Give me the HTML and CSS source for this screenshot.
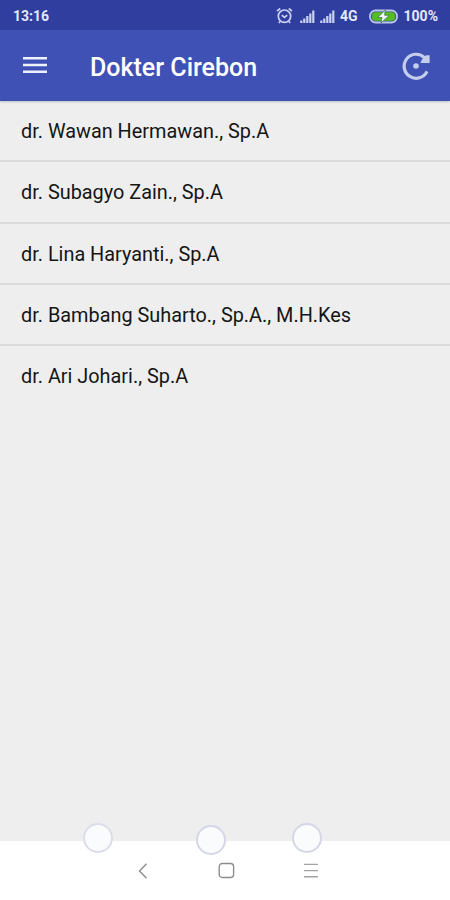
FILE: index.html
```html
<!DOCTYPE html>
<html lang="id">

<head>
    <title>Dokter Cirebon</title>
    <meta charset="utf-8">
    <meta name="viewport" content="width=device-width, initial-scale=1">
    <link rel="stylesheet" href="styles.css">
</head>

<body>
    <div class="statusbar">
        <span class="jam">13:16</span>
        <div class="status">
            <svg class="alarm" width="17" height="18" viewBox="0 0 17 18">
                <circle cx="8.5" cy="9.2" r="6.2" />
                <path d="M1 4.2L4.2 1.5M16 4.2L12.8 1.5M5.8 8.2L8.5 10.5L11.2 8.2M4 14.5L2.8 16M13 14.5L14.2 16" />
            </svg>
            <svg class="sinyal" width="15" height="13" viewBox="0 0 15 13">
                <path d="M1.3 13V10.5M4.3 13V8.5M7.3 13V6M10.3 13V3.5M13.3 13V.5" />
            </svg>
            <svg class="sinyal" width="15" height="13" viewBox="0 0 15 13">
                <path d="M1.3 13V10.5M4.3 13V8.5M7.3 13V6M10.3 13V3.5M13.3 13V.5" />
            </svg>
            <span class="jaringan">4G</span>
            <svg class="baterai" width="29" height="15" viewBox="0 0 29 15">
                <rect x="1" y="1.5" width="27" height="12" rx="5.5" fill="#3d5e78" stroke="#b9c5ed" stroke-width="1.8" />
                <rect x="3" y="3.3" width="23" height="8.4" rx="3.5" fill="#55bd20" />
                <path d="M16.2 1L8.8 8.5H13L12 14L20.2 6.3H15.6Z" fill="#f4f7ff" stroke="#3b6d51" stroke-width=".7" />
            </svg>
            <span class="persen">100%</span>
        </div>
    </div>

    <header class="toolbar">
        <svg class="menu" width="24" height="18" viewBox="0 0 24 18">
            <path d="M0 1.2H24M0 8H24M0 14.8H24" />
        </svg>
        <h1>Dokter Cirebon</h1>
        <svg class="refresh" width="30" height="30" viewBox="0 0 30 30">
            <path d="M26 20.4A12 12 0 1 1 23.5 6.6" />
            <path class="isi" d="M28.6 4.2V12H19.4L21 8.5L25 4.2Z" />
            <circle class="isi" cx="15" cy="15" r="2.8" />
        </svg>
    </header>

    <ul class="daftar">
        <li>dr. Wawan Hermawan., Sp.A</li>
        <li>dr. Subagyo Zain., Sp.A</li>
        <li>dr. Lina Haryanti., Sp.A</li>
        <li>dr. Bambang Suharto., Sp.A., M.H.Kes</li>
        <li>dr. Ari Johari., Sp.A</li>
    </ul>

    <footer class="navigasi">
        <span class="bulat kiri"></span>
        <span class="bulat tengah"></span>
        <span class="bulat kanan"></span>
        <svg width="18" height="18" viewBox="0 0 18 18">
            <path d="M12.5 1.8L5.5 9L12.5 16.2" />
        </svg>
        <svg width="18" height="18" viewBox="0 0 18 18">
            <rect x="1.2" y="1.5" width="14.4" height="14" rx="3.2" />
        </svg>
        <svg class="garis" width="18" height="18" viewBox="0 0 18 18">
            <path d="M2 2.4H16M2 8.6H16M2 14.8H16" />
        </svg>
    </footer>
</body>

</html>
```

FILE: styles.css
```css
* {
    box-sizing: border-box;
}

body {
    margin: 0;
    height: 900px;
    display: flex;
    flex-direction: column;
    background-color: #eeeeee;
    font-family: Roboto, sans-serif;
    overflow: hidden;
}

.statusbar {
    height: 30px;
    padding: 2px 12px 0 13px;
    display: flex;
    align-items: center;
    justify-content: space-between;
    background-color: #303f9f;
    color: #e3e8fb;
    font-size: 13px;
    font-weight: 700;
}

.jam {
    font-size: 14px;
}

.status {
    display: flex;
    align-items: center;
}

.alarm {
    margin-right: 7px;
    fill: none;
    stroke: #c9d2f3;
    stroke-width: 1.7;
}

.sinyal {
    margin-right: 5px;
    fill: none;
    stroke: #c9d2f3;
    stroke-width: 2.2;
}

.jaringan {
    margin-right: 11px;
    font-size: 14px;
}

.baterai {
    margin-right: 6px;
}

.persen {
    font-size: 14px;
}

.toolbar {
    height: 71px;
    padding: 0 19px 0 23px;
    display: flex;
    align-items: center;
    background-color: #3f51b5;
    box-shadow: 0 1px 2px rgba(0, 0, 0, 0.2);
}

.toolbar h1 {
    flex: 1;
    margin: 3px 0 0 43px;
    color: #ffffff;
    font-size: 25px;
    font-weight: 500;
}

.menu {
    fill: none;
    stroke: #eef1ff;
    stroke-width: 2.4;
}

.refresh {
    fill: none;
    stroke: #c5cdec;
    stroke-width: 3.2;
}

.refresh .isi {
    fill: #c5cdec;
    stroke: none;
}

.daftar {
    flex: 1;
    margin: 0;
    padding: 0;
    list-style: none;
}

.daftar li {
    height: 61.25px;
    padding: 0 21px;
    border-bottom: 2px solid #dcdcdc;
    color: #151515;
    font-size: 19.88px;
    line-height: 62px;
}

.daftar li:last-child {
    border-bottom: none;
}

.navigasi {
    position: relative;
    height: 59px;
    padding: 0 130px 0 134px;
    display: flex;
    align-items: center;
    justify-content: space-between;
    background-color: #ffffff;
}

.navigasi svg {
    fill: none;
    stroke: #8d8d8d;
    stroke-width: 1.4;
}

.navigasi .garis {
    stroke: #a3a3a3;
}

/* lingkaran di atas batas daftar dan navigasi */
.bulat {
    position: absolute;
    top: -18px;
    width: 30px;
    height: 30px;
    border: 2px solid #d5d6e8;
    border-radius: 50%;
    background-color: #fafbfc;
}

.kiri {
    left: 83px;
    border-color: #dcdde9;
}

.tengah {
    top: -16px;
    left: 196px;
}

.kanan {
    left: 292px;
}
```
